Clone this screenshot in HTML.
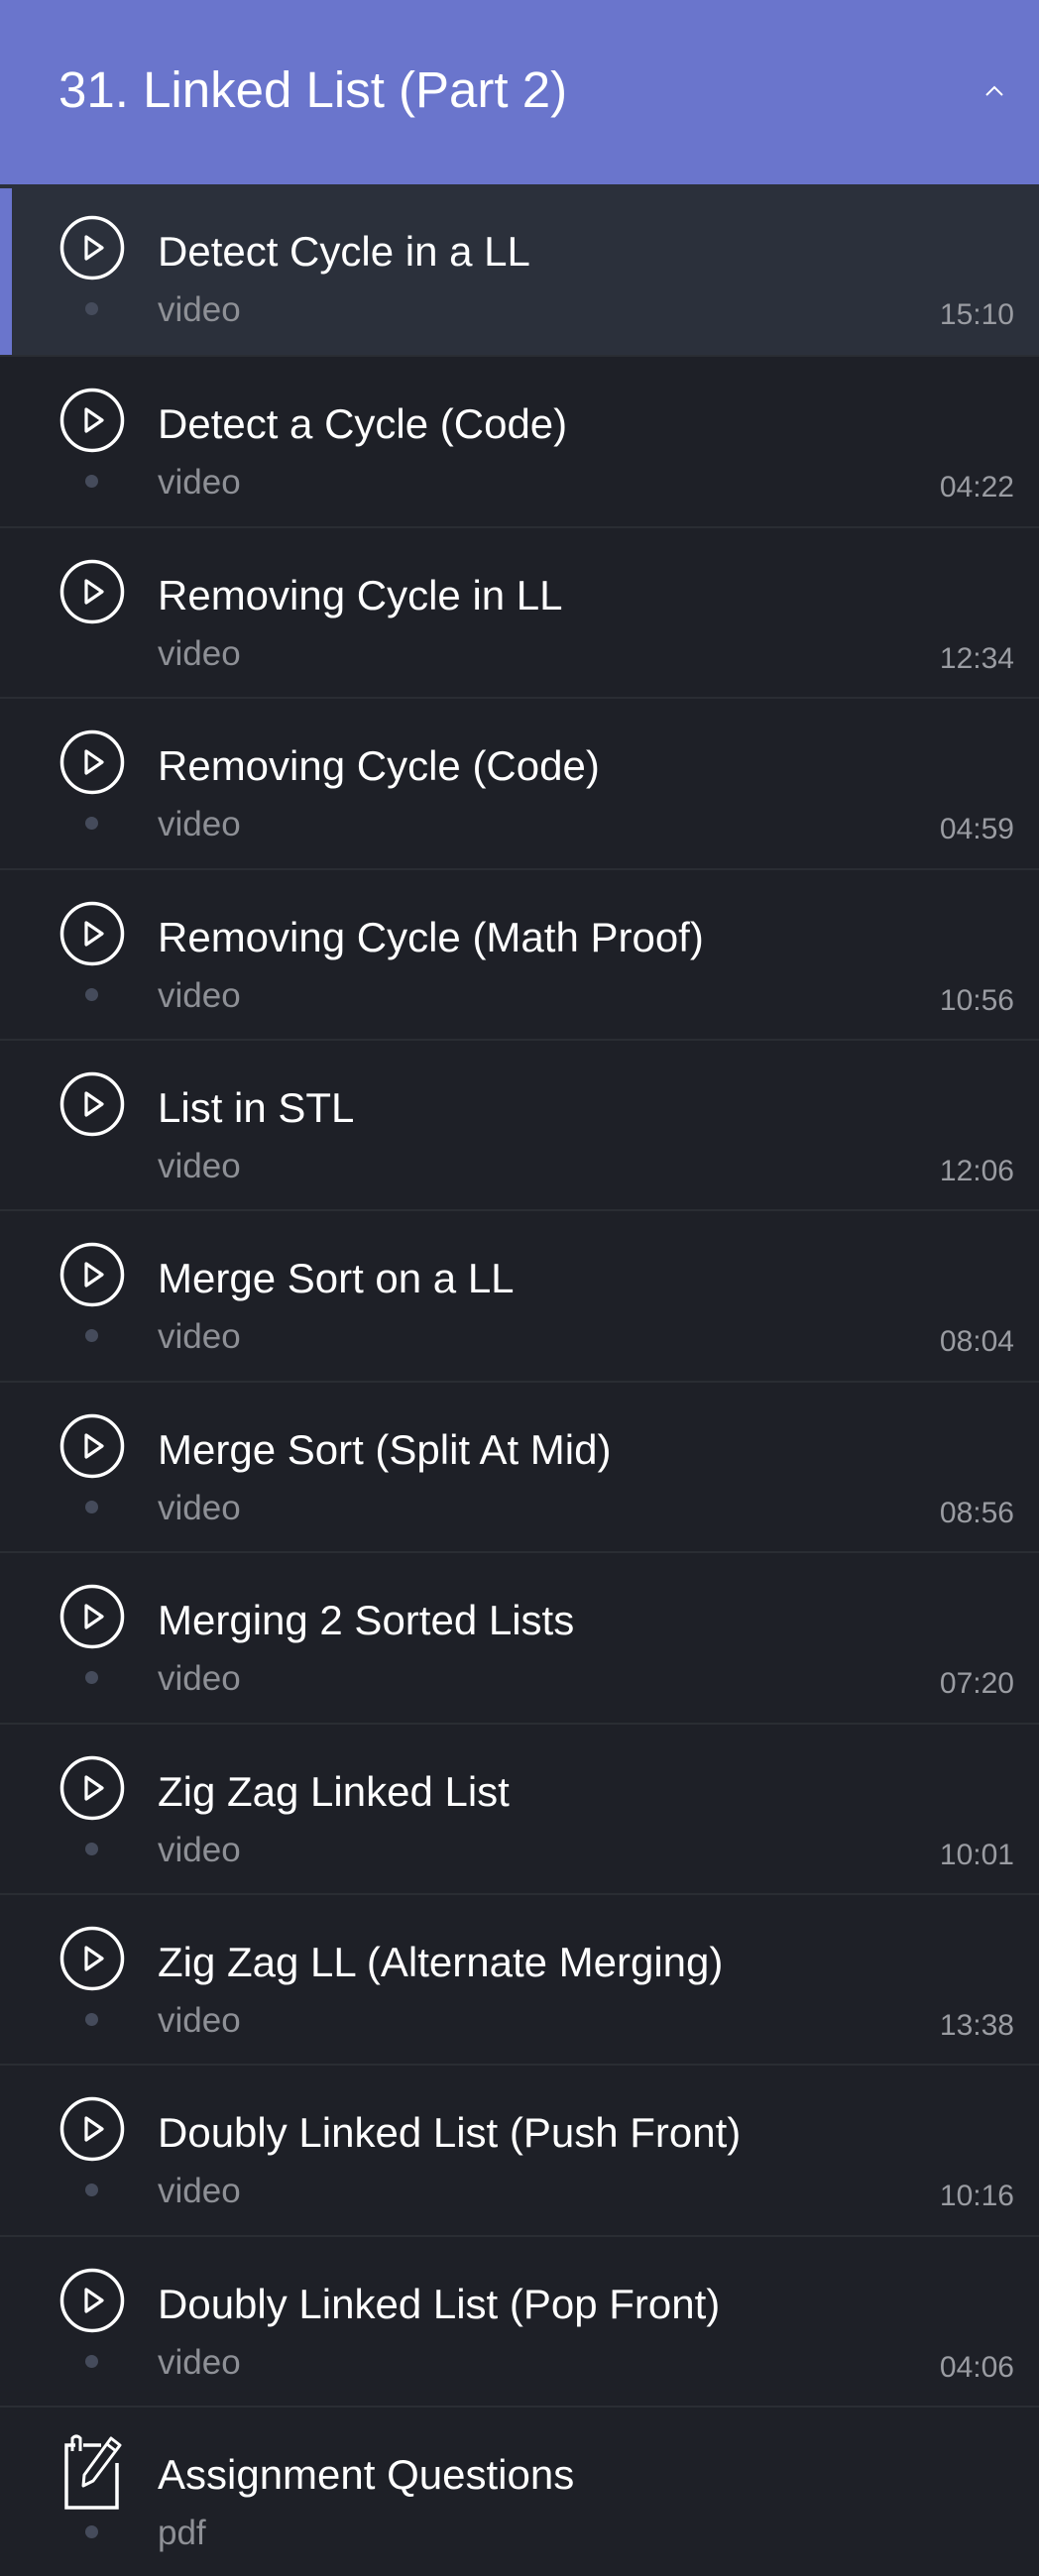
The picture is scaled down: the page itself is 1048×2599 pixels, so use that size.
<!DOCTYPE html>
<html><head><meta charset="utf-8"><style>
*{margin:0;padding:0;box-sizing:border-box}
body{width:1048px;height:2588px;background:#1e2027;font-family:"Liberation Sans",sans-serif;overflow:hidden;position:relative}
.hdr{position:absolute;left:0;top:0;width:1048px;height:186px;background:#6a75cc}
.hdr .t{position:absolute;left:59px;top:65px;font-size:51px;color:#fff;line-height:1;white-space:nowrap}
.hdr svg{position:absolute;left:990px;top:83px}
.row{position:absolute;left:0;width:1048px;height:172px;border-top:2px solid #2a2d33}
.row.act{background:#2b303b;border-top:none}
.row.act:before{content:"";position:absolute;left:0;top:4px;bottom:0;width:12px;background:#6a75cc}
.ic{position:absolute;left:60px;top:31px}
.ti{position:absolute;left:159px;top:47px;font-size:42px;color:#fff;line-height:1;white-space:nowrap}
.vi{position:absolute;left:159px;top:109px;font-size:35px;color:#8e9096;line-height:1}
.tm{position:absolute;right:25px;top:117px;font-size:30px;color:#9a9ca2;line-height:1}
.dot{position:absolute;left:86px;top:119px;width:13px;height:13px;border-radius:50%;background:#454b5b}
</style></head><body>
<div class="hdr"><div class="t">31. Linked List (Part 2)</div>
<svg width="26" height="18" viewBox="0 0 26 18"><path d="M5 13 L13 5 L21 13" fill="none" stroke="#fff" stroke-width="2"/></svg></div>
<div id="list"></div>
<script>
var items=[["Detect Cycle in a LL","15:10",1],["Detect a Cycle (Code)","04:22",1],["Removing Cycle in LL","12:34",0],["Removing Cycle (Code)","04:59",1],["Removing Cycle (Math Proof)","10:56",1],["List in STL","12:06",0],["Merge Sort on a LL","08:04",1],["Merge Sort (Split At Mid)","08:56",1],["Merging 2 Sorted Lists","07:20",1],["Zig Zag Linked List","10:01",1],["Zig Zag LL (Alternate Merging)","13:38",1],["Doubly Linked List (Push Front)","10:16",1],["Doubly Linked List (Pop Front)","04:06",1]];
var play='<svg class="ic" width="66" height="66" viewBox="0 0 66 66"><circle cx="33" cy="33" r="30.5" fill="none" stroke="#fff" stroke-width="3.5"/><path d="M27 22 L43 33 L27 44 Z" fill="none" stroke="#fff" stroke-width="3.2" stroke-linejoin="round"/></svg>';
var h='';
items.forEach(function(it,i){var y=186+i*172.4;
h+='<div class="row'+(i==0?' act':'')+'" style="top:'+y+'px">'+play+'<div class="ti">'+it[0]+'</div>'+(it[2]?'<div class="dot"></div>':'')+'<div class="vi">video</div><div class="tm">'+it[1]+'</div></div>';});
var ly=186+13*172.4;
h+='<div class="row" style="top:'+ly+'px"><svg class="ic" style="left:62px;top:26px" width="64" height="78" viewBox="0 0 64 78"><path d="M14 12 H5 V75 H56 V30" fill="none" stroke="#fff" stroke-width="3.5"/><path d="M22 12 H40" fill="none" stroke="#fff" stroke-width="3.5"/><path d="M11 18 V5 Q15 1 19 5 V18" fill="none" stroke="#fff" stroke-width="3"/><path d="M50 5 L59 12 L32 48 L22 53 L23 42 Z M46 11 L55 18" fill="none" stroke="#fff" stroke-width="3" stroke-linejoin="round"/></svg><div class="ti">Assignment Questions</div><div class="dot"></div><div class="vi">pdf</div></div>';
document.getElementById('list').innerHTML=h;
</script>
</body></html>
